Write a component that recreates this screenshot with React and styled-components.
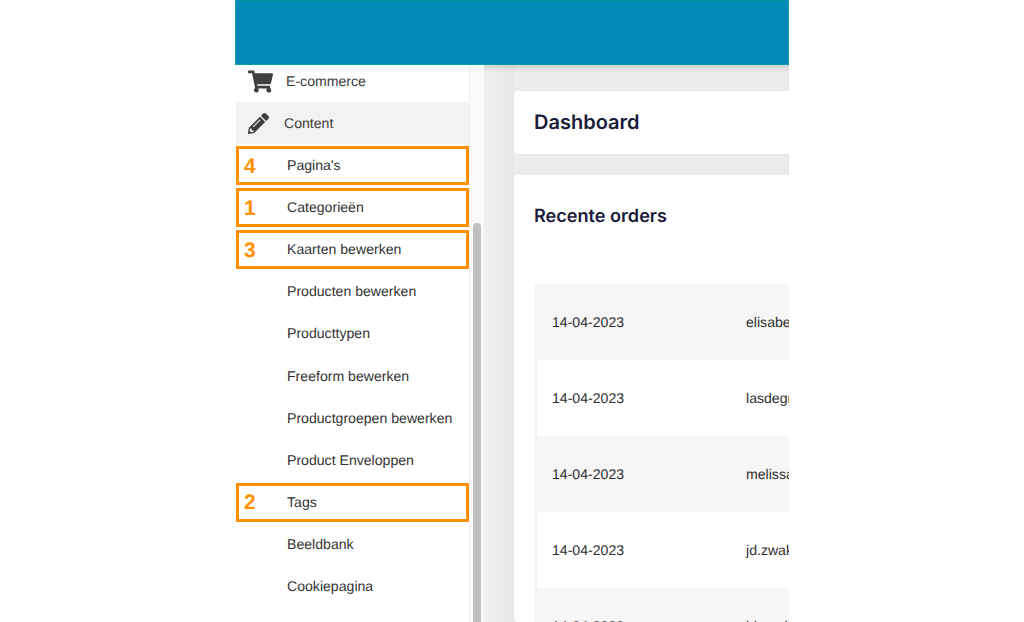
import React from 'react';
import styled, { createGlobalStyle } from 'styled-components';
import { FaShoppingCart, FaPencilAlt } from 'react-icons/fa';

const Global = createGlobalStyle`
  html, body { margin: 0; padding: 0; height: 622px; overflow: hidden; background: #fff; }
  body { font-family: "Liberation Sans", Arial, sans-serif; text-rendering: geometricPrecision; }
`;
const Frame = styled.div`
  width: 554px; height: 622px; margin-left: 235px; overflow: hidden;
  display: flex; flex-direction: column;
`;
const Header = styled.header`
  height: 65px; flex: none; box-sizing: border-box;
  background: #028bb6; border: 1px solid #0a9ea6; border-top-color: #04979f;
`;
const Body = styled.div`
  flex: 1; display: flex; min-height: 0;
`;
const Sidebar = styled.nav`
  width: 234px; flex: none; background: #fff;
  border-right: 1px solid #f0f0f0; overflow: hidden;
  display: flex; flex-direction: column;
`;
const MainRow = styled.div`
  display: flex; align-items: center; height: 42px; flex: none; color: #3c3c3c;
  font-size: 14.1px; background: ${p => (p.$active ? '#f2f2f2' : '#fff')};
  margin-left: 1px; box-sizing: border-box;
  ${p => p.$first && 'height: 37px; padding-bottom: 5px;'}
  svg { flex: none; color: #3f3f3f; }
`;
const IconSlot = styled.span`
  width: ${p => p.$w}px; flex: none; display: flex; padding-left: 12px; box-sizing: border-box;
`;
const SubRow = styled.div`
  display: flex; align-items: center; flex: none; box-sizing: border-box;
  height: ${p => (p.$mark ? '39.12px' : '42.12px')};
  color: #333; font-size: 14.1px;
  ${p => p.$mark && `
    border: 3px solid #ff9100; margin: 2px 0 1px 1px; padding-bottom: 1px;
  `}
  padding-left: ${p => (p.$mark ? '0' : '52px')};
`;
const Mark = styled.span`
  width: 48px; flex: none; padding-left: 5px; box-sizing: border-box;
  color: #ff9100; font-size: 21px; font-weight: 700; margin-top: 3px;
`;
const Track = styled.div`
  width: 14px; flex: none; background: #fafafa; padding: 158px 3px 0; box-sizing: border-box;
`;
const Thumb = styled.div`
  height: 500px; background: #bfbfbf; border-radius: 4px 4px 0 0;
`;
const Content = styled.main`
  flex: 1; min-width: 0; padding: 26px 0 0 30px;
  background: linear-gradient(90deg, #f1f1f1 0, #e8e8e8 30px, #ececec 30px);
  display: flex; flex-direction: column; gap: 21px;
  box-shadow: inset 0 6px 6px -3px rgba(0,0,0,.14);
`;
const Card = styled.section`
  background: #fff; border-radius: 4px 0 0 4px;
  box-shadow: 0 1px 2px rgba(0,0,0,.04);
`;
const TitleCard = styled(Card)`
  height: 63px; flex: none; display: flex; align-items: center; padding: 0 0 1px 20px; box-sizing: border-box;
`;
const Title = styled.h1`
  margin: 0; font: 600 20px/1 Inter, "Noto Sans", sans-serif; color: #1a1a3a;
`;
const OrdersCard = styled(Card)`
  flex: 1; min-height: 0; padding: 31px 0 0 20px; overflow: hidden;
`;
const Subtitle = styled.h2`
  margin: 0 0 58px; font: 600 18.1px/20px Inter, "Noto Sans", sans-serif; color: #1a1a3a;
`;
const OrderRow = styled.div`
  display: flex; align-items: center; height: 76px; width: 300px; padding-left: 15px;
  box-sizing: border-box; margin-left: 1px; color: #2e2e2e; font-size: 14.1px;
  background: ${p => (p.$alt ? '#f6f6f6' : '#fff')};
  border-left: 2px solid #f2f2f2; white-space: nowrap; overflow: hidden;
`;
const DateCell = styled.span`
  width: 194px; flex: none;
`;

const subs = [
  ['Pagina\'s', '4'], ['Categorieën', '1'], ['Kaarten bewerken', '3'],
  ['Producten bewerken'], ['Producttypen'], ['Freeform bewerken'],
  ['Productgroepen bewerken'], ['Product Enveloppen'], ['Tags', '2'],
  ['Beeldbank'], ['Cookiepagina'],
];
const orders = ['elisabeth', 'lasdegroot', 'melissa', 'jd.zwaks', 'bbvanh'];

export default function App() {
  return (
    <>
      <Global />
      <Frame>
        <Header />
        <Body>
          <Sidebar>
            <MainRow $first>
              <IconSlot $w={50}><FaShoppingCart size={25} /></IconSlot>E-commerce
            </MainRow>
            <MainRow $active>
              <IconSlot $w={48}><FaPencilAlt size={21} /></IconSlot>Content
            </MainRow>
            {subs.map(([label, mark]) => (
              <SubRow key={label} $mark={!!mark}>
                {mark && <Mark>{mark}</Mark>}
                {label}
              </SubRow>
            ))}
          </Sidebar>
          <Track><Thumb /></Track>
          <Content>
            <TitleCard><Title>Dashboard</Title></TitleCard>
            <OrdersCard>
              <Subtitle>Recente orders</Subtitle>
              {orders.map((o, i) => (
                <OrderRow key={o} $alt={i % 2 === 0}>
                  <DateCell>14-04-2023</DateCell>{o}
                </OrderRow>
              ))}
            </OrdersCard>
          </Content>
        </Body>
      </Frame>
    </>
  );
}
